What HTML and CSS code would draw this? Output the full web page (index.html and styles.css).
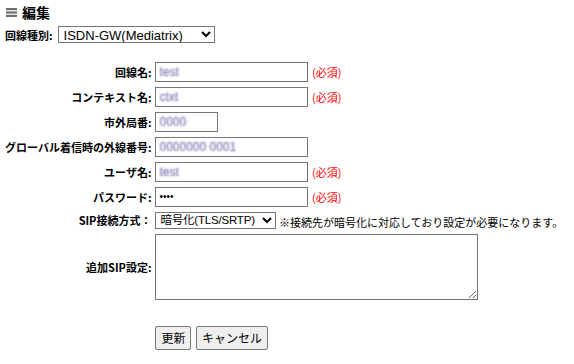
FILE: index.html
```html
<!DOCTYPE html>
<html lang="ja">
<head>
    <meta charset="UTF-8">
    <meta name="viewport" content="width=device-width, initial-scale=1.0">
    <title>編集</title>
    <link rel="stylesheet" href="styles.css">
</head>
<body>
    <div class="page-title">
        <svg class="title-icon" width="11" height="9" viewBox="0 0 11 9">
            <rect x="0" y="0" width="11" height="2.2" fill="#6e6e6e"/>
            <rect x="0" y="3.4" width="11" height="2.2" fill="#6e6e6e"/>
            <rect x="0" y="6.8" width="11" height="2.2" fill="#6e6e6e"/>
        </svg>
        <span>編集</span>
    </div>
    <div class="line-type">
        <label for="lineType">回線種別:</label>
        <select id="lineType" class="select-wide">
            <option>ISDN-GW(Mediatrix)</option>
        </select>
    </div>
    <form class="edit-form">
        <table class="form-table">
            <tr>
                <td class="label">回線名:</td>
                <td class="field"><input type="text" class="blur" value="test"> <span class="required">(必須)</span></td>
            </tr>
            <tr>
                <td class="label">コンテキスト名:</td>
                <td class="field"><input type="text" class="blur" value="ctxt"> <span class="required">(必須)</span></td>
            </tr>
            <tr>
                <td class="label">市外局番:</td>
                <td class="field"><input type="text" class="blur short" value="0000"></td>
            </tr>
            <tr>
                <td class="label">グローバル着信時の外線番号:</td>
                <td class="field"><input type="text" class="blur" value="0000000 0001"></td>
            </tr>
            <tr>
                <td class="label">ユーザ名:</td>
                <td class="field"><input type="text" class="blur" value="test"> <span class="required">(必須)</span></td>
            </tr>
            <tr>
                <td class="label">パスワード:</td>
                <td class="field"><input type="password" value="1234"> <span class="required">(必須)</span></td>
            </tr>
            <tr class="row-select">
                <td class="label">SIP接続方式：</td>
                <td class="field">
                    <select class="select-sip">
                        <option>暗号化(TLS/SRTP)</option>
                        <option>非暗号化(UDP)</option>
                    </select>
                    <span class="note">※接続先が暗号化に対応しており設定が必要になります。</span>
                </td>
            </tr>
            <tr>
                <td class="label">追加SIP設定:</td>
                <td class="field"><textarea></textarea></td>
            </tr>
            <tr>
                <td></td>
                <td class="field buttons">
                    <button type="button">更新</button>
                    <button type="button">キャンセル</button>
                </td>
            </tr>
        </table>
    </form>
</body>
</html>
```

FILE: styles.css
```css
body {
    margin: 0;
    padding: 0 0 0 3px;
    font-family: "Noto Sans CJK JP", "Liberation Sans", sans-serif;
    font-size: 11px;
    color: #000;
    background-color: #fff;
}
.page-title {
    display: flex;
    align-items: center;
    height: 24px;
    padding-left: 3px;
    font-size: 14px;
    font-weight: bold;
}
.title-icon {
    margin-right: 5px;
}
.line-type {
    display: flex;
    align-items: center;
    height: 21px;
    padding-left: 2px;
    font-weight: bold;
}
.line-type label {
    margin-right: 5px;
}
select {
    font-family: "Liberation Sans", "Noto Sans CJK JP", sans-serif;
    font-size: 13px;
    height: 17px;
    padding: 0 0 0 1px;
    border: 1px solid #767676;
    border-radius: 0;
    background-color: #fff;
    color: #000;
}
.select-wide {
    width: 157px;
}
.select-sip {
    width: 121px;
    font-size: 11.5px;
    letter-spacing: -0.2px;
    padding: 0;
}
.edit-form {
    margin-top: 14px;
}
.form-table {
    border-collapse: collapse;
}
.form-table td {
    padding: 2.5px 0;
    line-height: 14px;
}
.label {
    width: 146px;
    padding-left: 2px !important;
    padding-right: 4px !important;
    text-align: right;
    font-weight: bold;
    white-space: nowrap;
}
.field {
    white-space: nowrap;
}
input {
    box-sizing: border-box;
    width: 153px;
    height: 20px;
    margin: 0;
    padding: 1px 3px;
    border: 1px solid #767676;
    border-radius: 0;
    font-family: "Liberation Sans", sans-serif;
    font-size: 12px;
    vertical-align: middle;
}
input.short {
    width: 63px;
}
input.blur {
    color: rgba(150, 140, 190, 0.35);
    text-shadow: 0 0 2.5px rgba(120, 110, 170, 1);
}
input[type="password"] {
    font-size: 10px;
    letter-spacing: 0;
}
.required {
    color: #f00;
    margin-left: 1px;
    vertical-align: middle;
}
.note {
    vertical-align: middle;
}
.row-select td {
    padding: 2.5px 0 3px;
}
textarea {
    box-sizing: border-box;
    width: 323px;
    height: 66px;
    margin: 0;
    border: 1px solid #767676;
    border-radius: 0;
    vertical-align: middle;
    display: block;
}
.buttons {
    padding-top: 23px !important;
}
button {
    height: 24px;
    padding: 0 5px;
    margin: 0 2px 0 0;
    font-family: "Noto Sans CJK JP", sans-serif;
    font-size: 12px;
    background-color: #efefef;
    border: 1px solid #767676;
    border-radius: 2px;
    color: #000;
}
```
